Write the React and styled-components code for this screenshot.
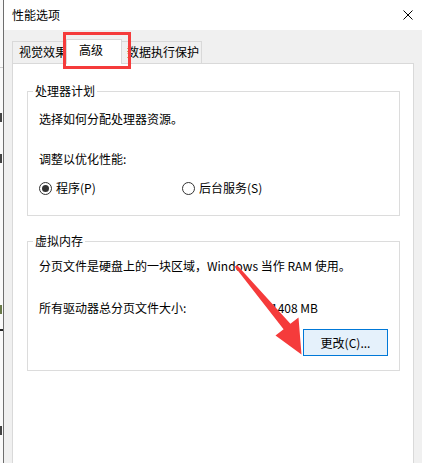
import React from "react";
import styled, { createGlobalStyle } from "styled-components";

const Global = createGlobalStyle`
  html, body { margin: 0; padding: 0; background: #fff; }
  body {
    font-family: "Noto Sans CJK SC", "Noto Sans", sans-serif;
    font-size: 12px;
    color: #000;
  }
  * { box-sizing: border-box; }
`;

const Page = styled.div`
  position: relative;
  display: flex;
  width: 422px;
  height: 463px;
  overflow: hidden;
`;

const Sliver = styled.div`
  width: 3px;
  flex-shrink: 0;
  background: #fafafa;
  display: flex;
  flex-direction: column;
`;

const SliverMark = styled.div`
  margin-top: ${(p) => p.$mt}px;
  height: ${(p) => p.$h}px;
  width: ${(p) => p.$w || 2}px;
  background: ${(p) => p.$c || "#444"};
`;

const Dialog = styled.div`
  flex: 1;
  display: flex;
  flex-direction: column;
  border-left: 1px solid #6e6e6e;
  background: #f0f0f0;
`;

const TitleBar = styled.div`
  height: 30px;
  flex-shrink: 0;
  background: #fff;
  display: flex;
  align-items: center;
  justify-content: space-between;
  padding: 0 9px 0 8px;
  line-height: 16px;
`;

const CloseBtn = styled.svg`
  display: block;
`;

const Body = styled.div`
  flex: 1;
  display: flex;
  flex-direction: column;
  padding: 9px 8px 0 8px;
`;

const TabStrip = styled.div`
  display: flex;
  align-items: flex-end;
  height: 24px;
  position: relative;
  z-index: 1;
`;

const Tab = styled.div`
  position: relative;
  width: ${(p) => p.$w}px;
  height: ${(p) => (p.$selected ? 25 : 22)}px;
  margin: 0 ${(p) => (p.$selected ? -2 : 0)}px ${(p) => (p.$selected ? -1 : 0)}px;
  padding-left: ${(p) => p.$pl}px;
  background: ${(p) => (p.$selected ? "#fff" : "#f0f0f0")};
  border: 1px solid #d9d9d9;
  border-bottom: none;
  line-height: 20px;
  white-space: nowrap;
  z-index: ${(p) => (p.$selected ? 2 : 1)};
`;

const Highlight = styled.div`
  position: absolute;
  left: -4px;
  top: -8px;
  right: -10px;
  bottom: -5px;
  border: 3px solid #f53b3b;
  pointer-events: none;
`;

const Panel = styled.div`
  flex: 1;
  background: #fff;
  border: 1px solid #d9d9d9;
  border-bottom: none;
  padding: 27px 13px 0 14px;
`;

const GroupBox = styled.div`
  position: relative;
  border: 1px solid #dcdcdc;
  margin-top: ${(p) => p.$mt || 0}px;
  padding: ${(p) => p.$pad};
`;

const Legend = styled.div`
  position: absolute;
  top: -9px;
  left: 5px;
  padding: 0 2px;
  background: #fff;
  line-height: 16px;
`;

const Line = styled.div`
  line-height: 16px;
  margin-top: ${(p) => p.$mt || 0}px;
  white-space: nowrap;
`;

const Row = styled.div`
  display: flex;
  align-items: center;
  line-height: 16px;
  margin-top: ${(p) => p.$mt || 0}px;
  justify-content: ${(p) => p.$justify || "flex-start"};
`;

const Cell = styled.div`
  width: ${(p) => (p.$w ? `${p.$w}px` : "auto")};
  white-space: nowrap;
`;

const Radio = styled.label`
  display: flex;
  align-items: center;
  gap: 4px;
  width: ${(p) => (p.$w ? `${p.$w}px` : "auto")};
`;

const Circle = styled.span`
  position: relative;
  width: 13px;
  height: 13px;
  border-radius: 50%;
  border: 1px solid #333;
  background: #fff;
  flex-shrink: 0;
  &::after {
    content: "";
    display: ${(p) => (p.$checked ? "block" : "none")};
    position: absolute;
    left: 2px;
    top: 2px;
    width: 7px;
    height: 7px;
    border-radius: 50%;
    background: #333;
  }
`;

const Button = styled.button`
  width: 85px;
  height: 27px;
  border: 1px solid #0078d7;
  background: #e5f1fb;
  font-family: inherit;
  font-size: 12px;
  color: #000;
  line-height: 16px;
  padding: 0;
`;

const Overlay = styled.svg`
  position: absolute;
  left: 0;
  top: 0;
  pointer-events: none;
  z-index: 10;
`;

export default function App() {
  return (
    <>
      <Global />
      <Page>
        <Sliver>
          <SliverMark $mt={67} $h={1} $w={3} $c="#cfcfcf" />
          <SliverMark $mt={45} $h={9} />
          <SliverMark $mt={32} $h={9} />
          <SliverMark $mt={142} $h={9} $c="#6a7a4a" />
          <SliverMark $mt={15} $h={2} $w={3} $c="#222" />
          <SliverMark $mt={95} $h={9} />
        </Sliver>
        <Dialog>
          <TitleBar>
            <span>性能选项</span>
            <CloseBtn width="10" height="10" viewBox="0 0 10 10">
              <path d="M0.5 0.5 L9.5 9.5 M9.5 0.5 L0.5 9.5" stroke="#000" strokeWidth="1" fill="none" />
            </CloseBtn>
          </TitleBar>
          <Body>
            <TabStrip>
              <Tab $w={56} $pl={6}>视觉效果</Tab>
              <Tab $w={56} $pl={12} $selected>
                高级
                <Highlight />
              </Tab>
              <Tab $w={82} $pl={6}>数据执行保护</Tab>
            </TabStrip>
            <Panel>
              <GroupBox $pad="19px 12px 19px 11px">
                <Legend>处理器计划</Legend>
                <Line>选择如何分配处理器资源。</Line>
                <Line $mt={24}>调整以优化性能:</Line>
                <Row $mt={13}>
                  <Radio $w={143}>
                    <Circle $checked />
                    程序(P)
                  </Radio>
                  <Radio>
                    <Circle />
                    后台服务(S)
                  </Radio>
                </Row>
              </GroupBox>
              <GroupBox $mt={25} $pad="16px 11px 14px 11px">
                <Legend>虚拟内存</Legend>
                <Line>分页文件是硬盘上的一块区域，Windows 当作 RAM 使用。</Line>
                <Row $mt={26}>
                  <Cell $w={232}>所有驱动器总分页文件大小:</Cell>
                  <Cell>1408 MB</Cell>
                </Row>
                <Row $mt={13} $justify="flex-end">
                  <Button>更改(C)...</Button>
                </Row>
              </GroupBox>
            </Panel>
          </Body>
        </Dialog>
        <Overlay width="422" height="463" viewBox="0 0 422 463">
          <polygon
            points="234.8,266.8 237.2,265.2 290.4,323.8 298.5,317.5 301.5,354.5 275.5,335.5 283.6,329.2"
            fill="#f53b3b"
          />
        </Overlay>
      </Page>
    </>
  );
}
